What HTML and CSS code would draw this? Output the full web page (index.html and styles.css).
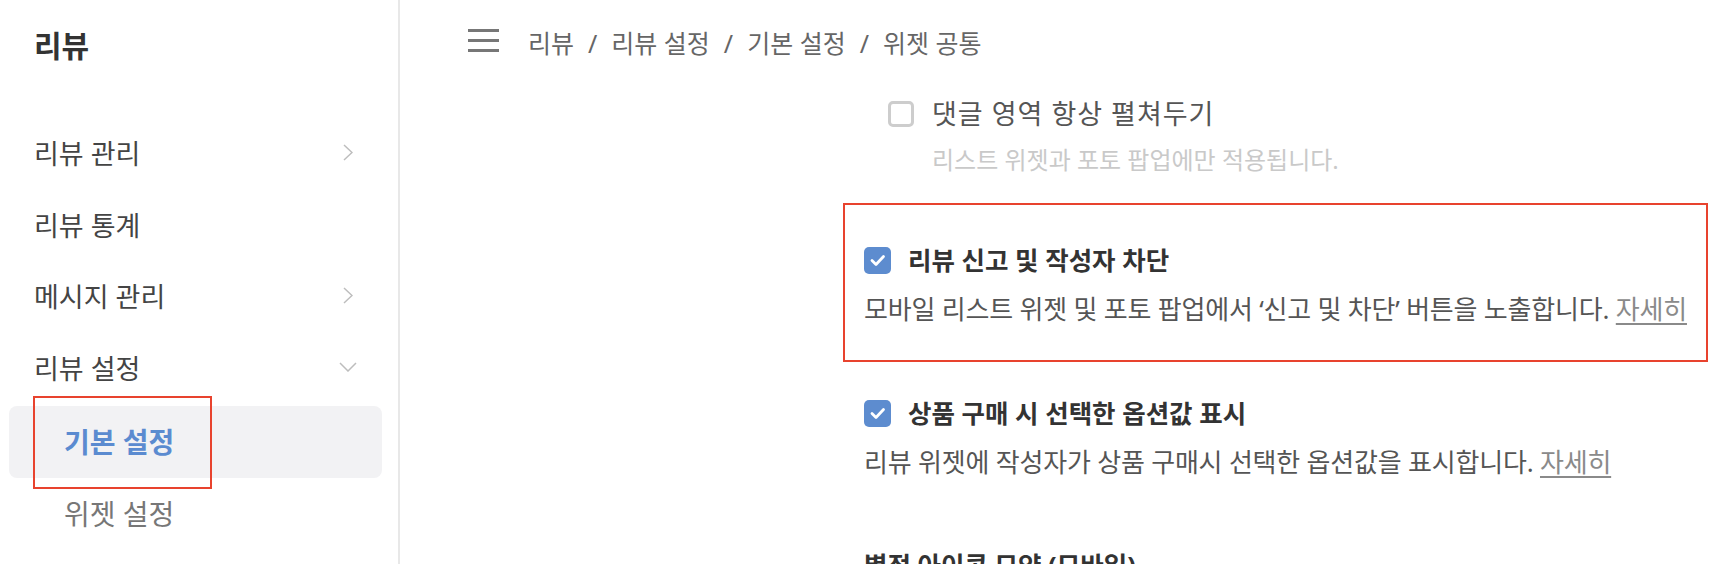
FILE: index.html
```html
<!DOCTYPE html>
<html lang="ko">
<head>
    <meta charset="UTF-8">
    <meta name="viewport" content="width=device-width, initial-scale=1.0">
    <title>리뷰 - 기본 설정</title>
    <link rel="stylesheet" href="styles.css">
</head>
<body>
    <div class="layout">
        <aside class="sidebar">
            <h1 class="brand">리뷰</h1>
            <ul class="menu">
                <li class="menu-item">
                    <span>리뷰 관리</span>
                    <span class="chev">
                        <svg width="10" height="17" viewBox="0 0 10 17"><polyline points="1,1 9,8.5 1,16" fill="none" stroke="#bdbdbd" stroke-width="1.5"/></svg>
                    </span>
                </li>
                <li class="menu-item">
                    <span>리뷰 통계</span>
                </li>
                <li class="menu-item">
                    <span>메시지 관리</span>
                    <span class="chev">
                        <svg width="10" height="17" viewBox="0 0 10 17"><polyline points="1,1 9,8.5 1,16" fill="none" stroke="#bdbdbd" stroke-width="1.5"/></svg>
                    </span>
                </li>
                <li class="menu-item">
                    <span>리뷰 설정</span>
                    <span class="chev">
                        <svg width="18" height="10" viewBox="0 0 18 10"><polyline points="1,1 9,9 17,1" fill="none" stroke="#bdbdbd" stroke-width="1.5"/></svg>
                    </span>
                </li>
            </ul>
            <ul class="submenu">
                <li class="sub-item active">기본 설정</li>
                <li class="sub-item">위젯 설정</li>
            </ul>
            <div class="mark mark-side"></div>
        </aside>

        <main class="main">
            <header class="topbar">
                <span class="burger"><i></i><i></i><i></i></span>
                <nav class="crumbs">
                    <span>리뷰</span><span class="sep">/</span><span>리뷰 설정</span><span class="sep">/</span><span>기본 설정</span><span class="sep">/</span><span>위젯 공통</span>
                </nav>
            </header>

            <div class="settings">
                <div class="sub-option">
                    <label class="opt-row">
                        <span class="box"></span>
                        <span class="sub-label">댓글 영역 항상 펼쳐두기</span>
                    </label>
                    <p class="note">리스트 위젯과 포토 팝업에만 적용됩니다.</p>
                </div>

                <div class="option marked">
                    <label class="opt-row">
                        <span class="box checked">
                            <svg width="27" height="27" viewBox="0 0 27 27"><polyline points="8,13.5 12,17.5 19.5,9.5" fill="none" stroke="#fff" stroke-width="2.8" stroke-linecap="round" stroke-linejoin="round"/></svg>
                        </span>
                        <span class="opt-title">리뷰 신고 및 작성자 차단</span>
                    </label>
                    <p class="desc">모바일 리스트 위젯 및 포토 팝업에서 ‘신고 및 차단’ 버튼을 노출합니다. <a href="#">자세히</a></p>
                </div>

                <div class="option second">
                    <label class="opt-row">
                        <span class="box checked">
                            <svg width="27" height="27" viewBox="0 0 27 27"><polyline points="8,13.5 12,17.5 19.5,9.5" fill="none" stroke="#fff" stroke-width="2.8" stroke-linecap="round" stroke-linejoin="round"/></svg>
                        </span>
                        <span class="opt-title">상품 구매 시 선택한 옵션값 표시</span>
                    </label>
                    <p class="desc">리뷰 위젯에 작성자가 상품 구매시 선택한 옵션값을 표시합니다. <a href="#">자세히</a></p>
                </div>

                <h3 class="section-title">별점 아이콘 모양 (모바일)</h3>
            </div>
        </main>
    </div>
</body>
</html>
```

FILE: styles.css
```css
* {
    box-sizing: border-box;
}
body {
    margin: 0;
    height: 564px;
    overflow: hidden;
    background: #fff;
    font-family: "Noto Sans", "Noto Sans CJK KR", sans-serif;
    color: #333;
}
ul {
    list-style: none;
    margin: 0;
    padding: 0;
}
p, h1, h3 {
    margin: 0;
}
.layout {
    display: flex;
    height: 564px;
}

/* sidebar */
.sidebar {
    position: relative;
    width: 400px;
    flex-shrink: 0;
    border-right: 2px solid #e8e8e8;
    padding: 0 16px 0 9px;
}
.brand {
    font-size: 30px;
    font-weight: 700;
    color: #333;
    line-height: 40px;
    padding: 26px 0 0 25px;
    height: 117px;
}
.menu-item {
    display: flex;
    align-items: center;
    justify-content: space-between;
    height: 71.5px;
    padding: 0 24px 0 25px;
    font-size: 27px;
    color: #444;
}
.chev {
    width: 20px;
    display: flex;
    justify-content: center;
}
.chev svg {
    display: block;
}
.submenu {
    margin-top: 3px;
}
.sub-item {
    height: 72px;
    line-height: 72px;
    padding-left: 55px;
    font-size: 28px;
    color: #777;
    border-radius: 8px;
}
.sub-item.active {
    background: #f2f2f4;
    color: #5b8bd0;
    font-weight: 700;
}
.mark {
    border: 2.5px solid #e8432e;
}
.mark-side {
    position: absolute;
    left: 33px;
    top: 396px;
    width: 179px;
    height: 93px;
}

/* main */
.main {
    flex: 1;
}
.topbar {
    display: flex;
    align-items: center;
    gap: 29px;
    height: 80px;
    padding-left: 68px;
}
.burger {
    display: flex;
    flex-direction: column;
    gap: 7px;
    width: 31px;
}
.burger i {
    display: block;
    height: 3px;
    background: #777;
}
.crumbs {
    font-size: 25px;
    color: #666;
    padding-top: 3px;
}
.sep {
    margin: 0 14px;
}
.settings {
    margin: 0 35px 0 443px;
}
.opt-row {
    display: flex;
    align-items: center;
    gap: 17px;
}
.box {
    width: 27px;
    height: 27px;
    border-radius: 5px;
    flex-shrink: 0;
}
.box svg {
    display: block;
}
.sub-option {
    padding: 21px 0 0 45px;
}
.sub-option .box {
    width: 26px;
    height: 26px;
    border: 3px solid #cdcdcd;
}
.sub-option .opt-row {
    gap: 18px;
}
.sub-label {
    font-size: 27px;
    letter-spacing: 1px;
    color: #555;
    line-height: 26px;
}
.note {
    margin-top: 18px;
    padding-left: 44px;
    font-size: 24px;
    line-height: 30px;
    color: #c9c9c9;
}
.box.checked {
    background: #5d8ccf;
}
.option {
    padding: 0 21px;
}
.option.marked {
    margin-top: 28px;
    border: 2px solid #e8432e;
    padding: 42px 19px 34px;
}
.option.second {
    margin-top: 38px;
}
.opt-title {
    font-size: 25.5px;
    font-weight: 700;
    color: #333;
    line-height: 27px;
}
.desc {
    margin-top: 18px;
    font-size: 26px;
    line-height: 34px;
    color: #555;
    letter-spacing: -0.2px;
    white-space: nowrap;
}
.desc a {
    color: #8a8a8a;
    text-decoration: underline;
    text-underline-offset: 4px;
}
.section-title {
    margin-top: 69px;
    padding-left: 21px;
    font-size: 25.5px;
    font-weight: 700;
    line-height: 34px;
    color: #333;
}
```
